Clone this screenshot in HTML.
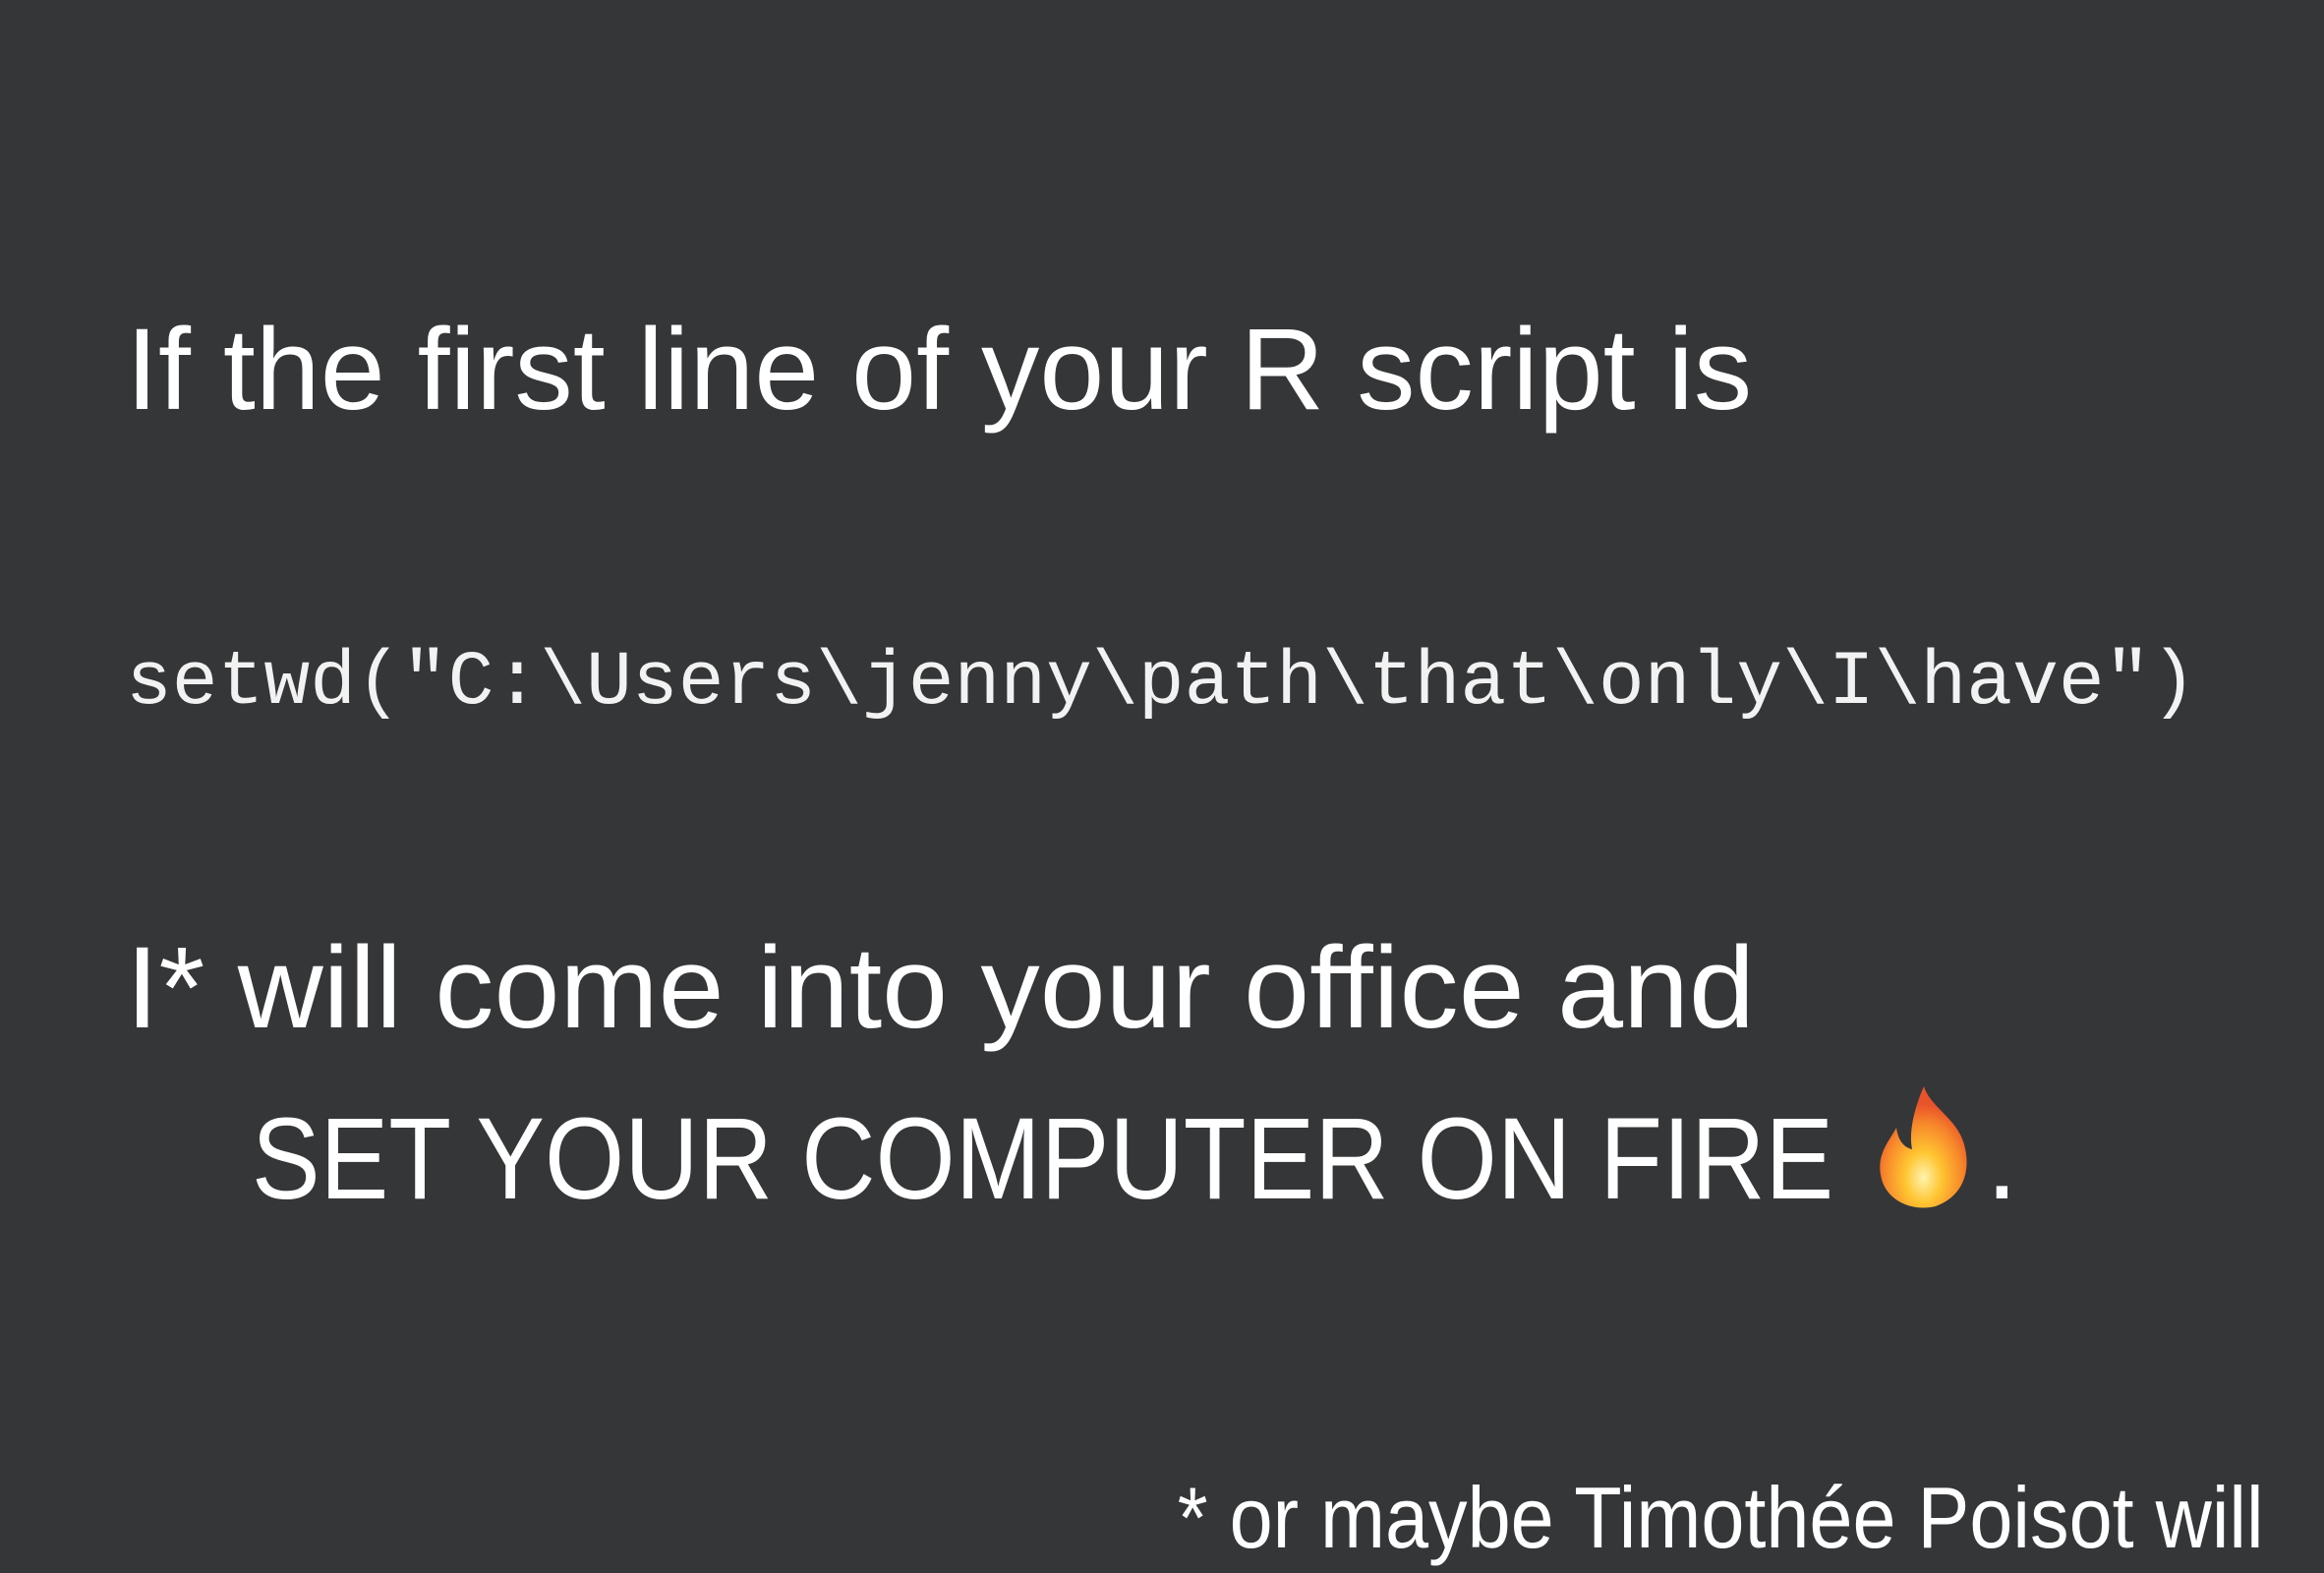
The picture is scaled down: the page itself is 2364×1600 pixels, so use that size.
<!DOCTYPE html>
<html><head><meta charset="utf-8"><style>
html,body{margin:0;padding:0}
body{width:2364px;height:1600px;background:#343638;position:relative;overflow:hidden;font-family:"Liberation Sans",sans-serif;color:#fff}
.t{position:absolute;white-space:nowrap;line-height:normal;transform-origin:0 0}
</style></head><body>
<div class="t" style="left:128px;top:308px;font-size:118px;transform:scaleX(1.005)">If the first line of your R script is</div>
<div class="t" style="left:128px;top:651px;font-size:78px;font-family:'Liberation Mono',monospace;color:#f2f2f2">setwd("C:\Users\jenny\path\that\only\I\have")</div>
<div class="t" style="left:128px;top:937px;font-size:118px;transform:scaleX(1.02)">I* will come into your office and</div>
<div class="t" style="left:256px;top:1111px;font-size:118px;transform:scaleX(0.885)">SET YOUR COMPUTER ON FIRE</div>
<svg style="position:absolute;left:1905px;top:1103px" width="110" height="128" viewBox="0 0 110 128">
<defs><radialGradient id="g" cx="50%" cy="75%" r="60%"><stop offset="0" stop-color="#fff3b0"/><stop offset="0.35" stop-color="#ffc531"/><stop offset="0.75" stop-color="#f7862b"/><stop offset="1" stop-color="#e8542a"/></radialGradient></defs>
<path d="M52 2 C58 22 84 34 92 58 C100 82 96 112 64 124 C40 130 12 118 8 92 C4 70 18 56 24 44 C26 58 32 64 40 66 C36 46 44 20 52 2Z" fill="url(#g)"/>
</svg>
<div class="t" style="left:2020px;top:1111px;font-size:118px">.</div>
<div class="t" style="right:61px;top:1493px;font-size:88px;transform:scaleX(0.90);transform-origin:100% 0">* or maybe Timothée Poisot will</div>
</body></html>
